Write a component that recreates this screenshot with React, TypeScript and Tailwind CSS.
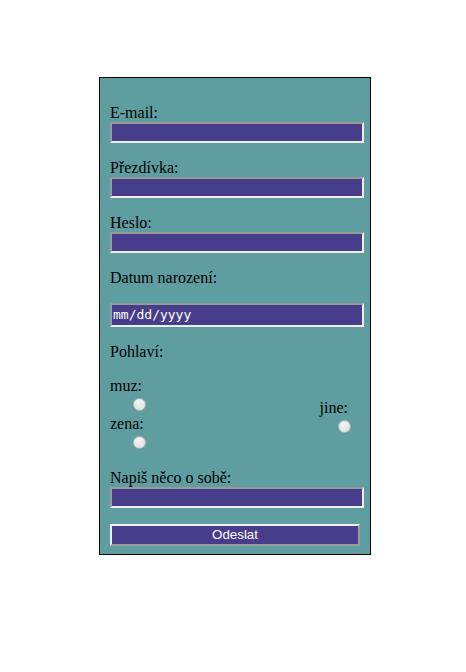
const serif = "font-['Liberation_Serif','Times_New_Roman',serif]";

function Label({ children, className = "" }: { children: React.ReactNode; className?: string }) {
  return <div className={`h-[18px] text-[16px] leading-[18px] text-black ${serif} ${className}`}>{children}</div>;
}

function Field({ className = "", children }: { className?: string; children?: React.ReactNode }) {
  return (
    <div
      className={`box-border h-[21px] w-[254px] border-2 border-solid border-t-[#9a9a9a] border-l-[#9a9a9a] border-b-[#eeeeee] border-r-[#eeeeee] bg-[#483d8b] ${className}`}
    >
      {children}
    </div>
  );
}

function Radio({ className = "" }: { className?: string }) {
  return (
    <span
      className={`block h-[13px] w-[13px] rounded-full border border-[#b5b5b5] bg-[radial-gradient(circle_at_40%_35%,#f4f4f4,#dcdcdc)] ${className}`}
    />
  );
}

export default function App() {
  return (
    <div className="min-h-[672px] bg-white pt-[77px]">
      <form
        className="ml-[99px] w-[272px] border border-black bg-[#5f9ea0] px-[10px] pt-[26px] pb-[8px]"
        onSubmit={(e) => e.preventDefault()}
      >
        <Label>E-mail:</Label>
        <Field />

        <Label className="mt-[16px]">Přezdívka:</Label>
        <Field />

        <Label className="mt-[16px]">Heslo:</Label>
        <Field />

        <Label className="mt-[16px]">Datum narození:</Label>
        <Field className="mt-[16px] h-[24px] pl-[1px]">
          <span className="block text-[13px] leading-[20px] text-white font-['DejaVu_Sans_Mono',monospace]">
            mm/dd/yyyy
          </span>
        </Field>

        <Label className="mt-[16px]">Pohlaví:</Label>

        {/* pohlaví: muz / zena vlevo, jine vpravo */}
        <div className="mt-[16px] flex justify-between">
          <div>
            <Label>muz:</Label>
            <Radio className="ml-[23px] mt-[3px]" />
            <Label className="mt-[4px]">zena:</Label>
            <Radio className="ml-[23px] mt-[3px]" />
          </div>
          <div className="mr-[9px] mt-[22px] flex flex-col items-end">
            <Label className="mr-[3px]">jine:</Label>
            <Radio className="mt-[3px]" />
          </div>
        </div>

        <Label className="mt-[20px]">Napiš něco o sobě:</Label>
        <Field />

        <button
          type="submit"
          className="mt-[16px] box-border block h-[22px] w-[250px] border-2 border-solid border-t-[#f0f0f0] border-l-[#f0f0f0] border-b-[#9a9a9a] border-r-[#9a9a9a] bg-[#483d8b] text-[13.33px] leading-[18px] text-white font-['Liberation_Sans',Arial,sans-serif]"
        >
          Odeslat
        </button>
      </form>
    </div>
  );
}
